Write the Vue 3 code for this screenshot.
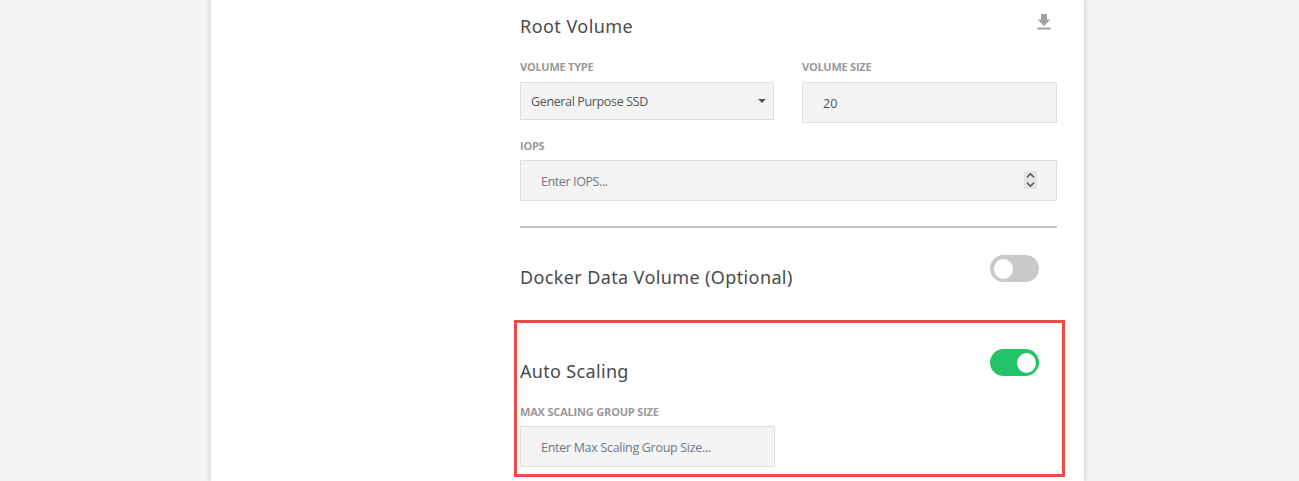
<script setup>
import { ref } from 'vue'

const dockerVolume = ref(false)
const autoScaling = ref(true)
</script>

<template>
  <main class="page">
    <div class="card">
      <div class="form">
        <header class="head root-head">
          <h2 class="title root-title">Root Volume</h2>
          <svg class="download" width="14" height="17" viewBox="0 0 14 17">
            <path d="M4 0h6v5.500h3.500L7 12 .5 5.500H4z" />
            <path d="M.5 13.500h13v2H.5z" />
          </svg>
        </header>

        <div class="row">
          <div class="field">
            <label class="label type-label">Volume Type</label>
            <div class="control select">
              <span class="value type-value">General Purpose SSD</span>
              <i class="caret"></i>
            </div>
          </div>
          <div class="field">
            <label class="label size-label">Volume Size</label>
            <div class="control input"><span class="value">20</span></div>
          </div>
        </div>

        <div class="iops">
          <label class="label iops-label">IOPS</label>
          <div class="control input">
            <span class="placeholder iops-text">Enter IOPS...</span>
            <svg class="spinner" width="13" height="18" viewBox="0 0 13 18">
              <path d="M3 6.300 6.500 2.900 10 6.300M3 11.700 6.500 15.100 10 11.700" />
            </svg>
          </div>
        </div>

        <div class="rule"></div>

        <div class="head docker-head">
          <h2 class="title docker-title">Docker Data Volume (Optional)</h2>
          <button class="toggle" :class="{ on: dockerVolume }" @click="dockerVolume = !dockerVolume"><i class="knob"></i></button>
        </div>

        <section class="highlight">
          <div class="head scaling-head">
            <h2 class="title scaling-title">Auto Scaling</h2>
            <button class="toggle" :class="{ on: autoScaling }" @click="autoScaling = !autoScaling"><i class="knob"></i></button>
          </div>
          <label class="label max-label">Max Scaling Group Size</label>
          <div class="control input max-input">
            <span class="placeholder max-text">Enter Max Scaling Group Size...</span>
          </div>
        </section>
      </div>
    </div>
  </main>
</template>

<style>
body {
  margin: 0;
  background: #f4f4f4;
}
</style>

<style scoped>
* {
  box-sizing: border-box;
}
.page {
  height: 481px;
  overflow: hidden;
  background: #f4f4f4;
  font-family: "Noto Sans", "Open Sans", sans-serif;
}
.card {
  width: 873px;
  height: 481px;
  margin-left: 211px;
  padding-left: 309px;
  background: #fff;
  box-shadow: 0 0 6px rgba(0, 0, 0, 0.2);
}
.form {
  width: 537px;
}
.head {
  display: flex;
  justify-content: space-between;
  align-items: flex-start;
}
.title {
  margin: 0;
  font-size: 18px;
  font-weight: 400;
  line-height: 24px;
  color: #4a4a4a;
  white-space: nowrap;
}
.root-head {
  height: 59px;
  padding: 14px 6px 0 0;
}
.root-title {
  letter-spacing: 0.45px;
}
.docker-title {
  margin-top: 10px;
  letter-spacing: 0.38px;
}
.scaling-title {
  margin-top: 10px;
  letter-spacing: 0.33px;
}
.download {
  fill: #a3a3a3;
}
.row {
  display: grid;
  grid-template-columns: 254px 255px;
  column-gap: 28px;
  height: 79px;
}
.label {
  display: block;
  height: 23px;
  font-family: "Open Sans", "Noto Sans", sans-serif;
  font-size: 11px;
  font-weight: 700;
  line-height: 16px;
  letter-spacing: -0.25px;
  color: #999;
  text-transform: uppercase;
  white-space: nowrap;
}
.control {
  display: flex;
  align-items: center;
  justify-content: space-between;
  border: 1px solid #dfdfdf;
  border-radius: 1px;
  background: #f4f4f4;
  font-family: "Open Sans", "Noto Sans", sans-serif;
  font-size: 12.5px;
  line-height: 18px;
  color: #555;
  white-space: nowrap;
}
.select {
  height: 38px;
  padding: 0 7px 0 10px;
}
.type-value {
  margin-top: 2px;
  letter-spacing: -0.36px;
}
.input {
  height: 41px;
  padding: 2px 19px 0 20px;
}
.caret {
  border: 4px solid transparent;
  border-top-color: #555;
  border-bottom: 0;
}
.placeholder {
  color: #6f7882;
}
.iops-text {
  letter-spacing: -0.4px;
}
.max-text {
  letter-spacing: -0.3px;
}
.iops {
  height: 88px;
}
.iops-label {
  height: 22px;
}
.spinner {
  background: #e4e4e4;
  margin-top: -3px;
}
.spinner path {
  fill: none;
  stroke: #555;
  stroke-width: 1.500;
}
.rule {
  height: 2px;
  background: #c6c6c6;
}
.docker-head {
  height: 92px;
  padding: 27px 18px 0 0;
}
.toggle {
  display: flex;
  align-items: center;
  width: 49px;
  height: 27px;
  padding: 1px 4px 0;
  border: 0;
  border-radius: 14px;
  background: #c9c9c9;
}
.toggle.on {
  justify-content: flex-end;
  padding: 1px 3px 0;
  background: #23c468;
}
.knob {
  width: 19px;
  height: 20px;
  border-radius: 50%;
  background: #fff;
}
.highlight {
  width: 551px;
  height: 157px;
  margin-left: -6px;
  padding: 0 5px 0 3px;
  border: 3px solid #eb4b46;
}
.scaling-head {
  height: 81px;
  padding: 26px 18px 0 0;
}
.max-label {
  height: 22px;
  letter-spacing: -0.18px;
}
.max-input {
  width: 255px;
}
</style>
